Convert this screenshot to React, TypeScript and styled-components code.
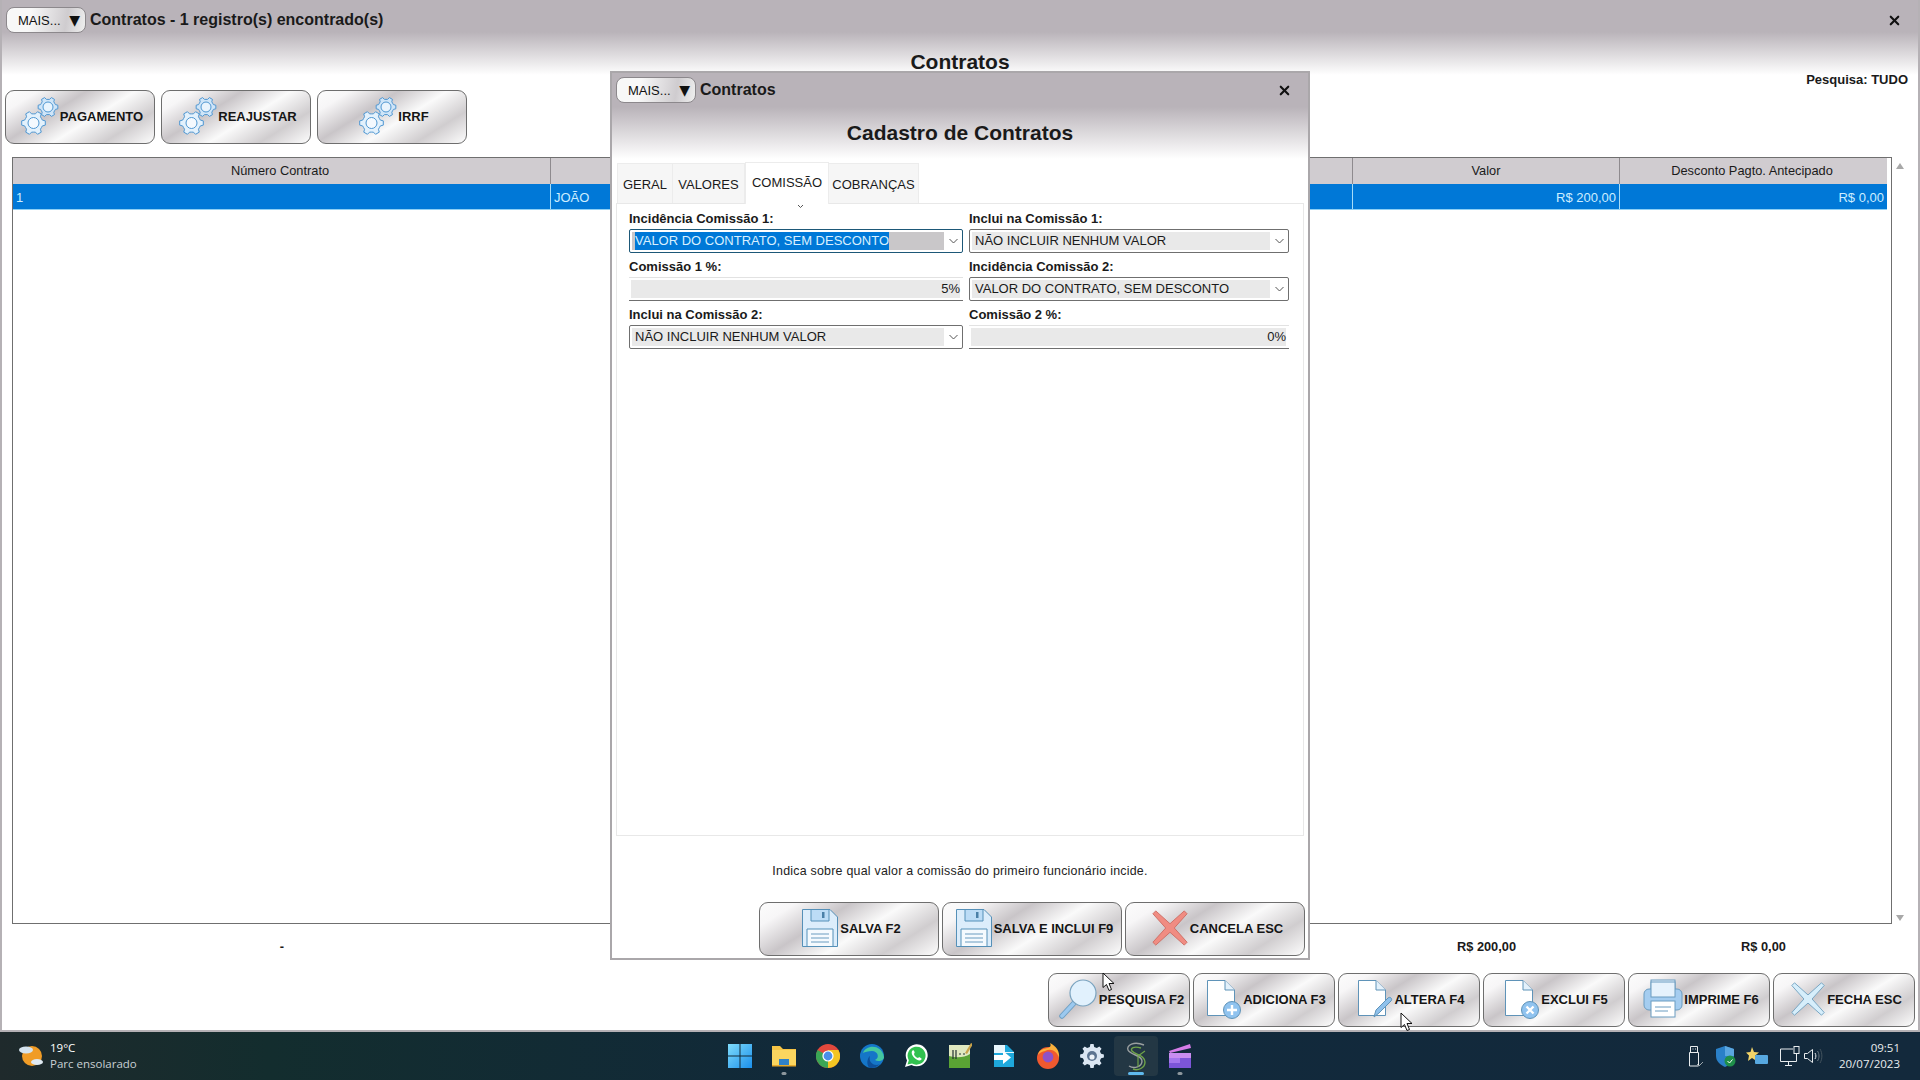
import { FC, ReactNode } from "react";
import styled, { createGlobalStyle } from "styled-components";
import { X } from "lucide-react";

const GlobalStyle = createGlobalStyle`
  html, body {
    margin: 0;
    padding: 0;
    background: #fff;
    overflow: hidden;
  }
  * { box-sizing: border-box; }
`;

const metal = `linear-gradient(148deg, #fcfcfc 0, #f7f6f7 14%, #c9c5c8 35%, #fafafa 56%, #d0cdcf 78%, #fdfdfd 100%)`;

const Screen = styled.div`
  position: relative;
  width: 1920px;
  height: 1080px;
  display: flex;
  flex-direction: column;
  font-family: "Liberation Sans", Arial, sans-serif;
  color: #1a1a1a;
  overflow: hidden;
`;

const Window = styled.main`
  height: 1032px;
  border: solid #b5b1b5;
  border-width: 0 2px 2px 2px;
  background: linear-gradient(#b9b3b9 0, #b9b3b9 32px, #fff 75px);
  display: flex;
  flex-direction: column;
`;

const TopRow = styled.div`
  height: 40px;
  padding: 7px 11px 7px 4px;
  display: flex;
  align-items: center;
  gap: 4px;
`;

const MoreButton = styled.button`
  width: 80px;
  height: 26px;
  padding: 0 5px 0 11px;
  border: 1px solid #8c888c;
  border-radius: 8px;
  background: linear-gradient(100deg, #f8f8f8 30%, #cfcccf 75%, #efefef 100%);
  display: flex;
  align-items: center;
  justify-content: space-between;
  font: 13px "Liberation Sans", Arial, sans-serif;
  color: #111;
`;

const MoreArrow = styled.span`
  font-family: "DejaVu Sans", sans-serif;
  font-size: 14px;
`;

const WindowTitle = styled.span`
  font-size: 16px;
  font-weight: 700;
  flex: 1;
`;

const CloseMark = styled(X)`
  color: #111;
  margin-right: 5px;
`;

const SubRow = styled.div`
  height: 50px;
  padding: 10px 10px 2px;
  display: grid;
  grid-template-columns: 1fr auto 1fr;
`;

const PageTitle = styled.h1`
  grid-column: 2;
  margin: 0;
  font-size: 21px;
  line-height: 24px;
  align-self: start;
`;

const SearchInfo = styled.span`
  grid-column: 3;
  justify-self: end;
  align-self: end;
  font-size: 13px;
  font-weight: 700;
  line-height: 16px;
`;

const Toolbar = styled.div`
  display: flex;
  gap: 6px;
  padding-left: 3px;
`;

const ActionButton = styled.button<{ $w?: number }>`
  width: ${(p) => p.$w ?? 150}px;
  height: 54px;
  padding: 0 0 2px 4px;
  border: 1px solid #6e6e6e;
  border-radius: 9px;
  background: ${metal};
  display: flex;
  align-items: center;
  justify-content: center;
  gap: 1px;
  font: 700 13px "Liberation Sans", Arial, sans-serif;
  color: #151515;
  white-space: nowrap;

  svg { flex: none; }
`;

const TableArea = styled.div`
  margin: 13px 0 0 10px;
  height: 767px;
  display: flex;
`;

const Table = styled.div`
  width: 1880px;
  border: 1px solid #6f6f6f;
`;

const columns = "538px 802px 267px 267px";

const HeaderRow = styled.div`
  display: grid;
  grid-template-columns: ${columns};
  height: 26px;
  background: #d0ccd0;
  width: 1874px;
  font-size: 12.8px;
`;

const HeaderCell = styled.div`
  display: flex;
  align-items: center;
  justify-content: center;
  padding-bottom: 2px;
  border-right: 1px solid #8e8a8e;
  &:first-child { padding-right: 3px; }
  &:last-child { border-right: 0; padding-right: 3px; }
`;

const DataRow = styled.div`
  display: grid;
  grid-template-columns: ${columns};
  height: 26px;
  width: 1874px;
  background: #0078d7;
  color: #cdeeff;
  font-size: 13px;
  border-bottom: 1px solid #8ed0f5;
`;

const DataCell = styled.div<{ $right?: boolean }>`
  display: flex;
  align-items: center;
  padding: 1px 3px 0;
  justify-content: ${(p) => (p.$right ? "flex-end" : "flex-start")};
  border-right: 1px solid #a6dcf8;
  &:last-child { border-right: 0; }
`;

const Scrollbar = styled.div`
  width: 16px;
  display: flex;
  flex-direction: column;
  justify-content: space-between;
  align-items: center;
  padding: 6px 0 3px;
`;

const ScrollArrow = styled.span<{ $down?: boolean }>`
  width: 0;
  height: 0;
  border-left: 4px solid transparent;
  border-right: 4px solid transparent;
  ${(p) => (p.$down ? "border-top: 6px solid #a8a8a8;" : "border-bottom: 6px solid #a8a8a8;")}
`;

const TotalsRow = styled.div`
  margin: 14px 0 0 11px;
  width: 1876px;
  height: 18px;
  display: grid;
  grid-template-columns: ${columns};
  font-size: 12.8px;
  font-weight: 700;
  line-height: 18px;
  text-align: center;

  span:last-child { padding-left: 20px; }
`;

const Footer = styled.div`
  margin-top: 17px;
  padding-right: 3px;
  display: flex;
  justify-content: flex-end;
  gap: 3px;
`;

/* modal */

const Modal = styled.section`
  position: absolute;
  left: 610px;
  top: 71px;
  width: 700px;
  height: 889px;
  border: 2px solid #aaa7aa;
  background: linear-gradient(#b9b3b9 0, #b9b3b9 34px, #fff 86px);
  display: flex;
  flex-direction: column;
`;

const ModalTop = styled(TopRow)`
  height: 38px;
  padding: 0 11px 4px 4px;
`;

const ModalHeading = styled.h2`
  margin: 10px 0 0;
  font-size: 21px;
  line-height: 24px;
  text-align: center;
`;

const TabStrip = styled.div`
  margin-top: 16px;
  height: 42px;
  padding-left: 5px;
  display: flex;
  align-items: flex-end;
`;

const Tab = styled.div<{ $active?: boolean; $w: number }>`
  width: ${(p) => p.$w}px;
  height: ${(p) => (p.$active ? 42 : 40)}px;
  padding-top: ${(p) => (p.$active ? 0 : 2)}px;
  padding-bottom: ${(p) => (p.$active ? 2 : 0)}px;
  margin-bottom: ${(p) => (p.$active ? -1 : 0)}px;
  position: relative;
  z-index: ${(p) => (p.$active ? 1 : 0)};
  display: flex;
  align-items: center;
  justify-content: center;
  font-size: 13px;
  background: ${(p) => (p.$active ? "#fff" : "#f6f6f6")};
  border: 1px solid #ececec;
  border-bottom: 0;
  border-left-width: ${(p) => (p.$active ? 1 : 0)}px;
  &:first-child { border-left-width: 1px; }
`;

const Panel = styled.div`
  position: relative;
  margin: 0 4px;
  height: 633px;
  border: 1px solid #e8e8e8;
  background: #fff;
  padding: 7px 12px 6px;
  display: grid;
  grid-template-columns: 334px 320px;
  grid-auto-rows: 42px;
  gap: 6px;
`;

const TabCaret = styled.span`
  position: absolute;
  left: 180px;
  top: 0;
  display: flex;
`;

const Field = styled.div`
  display: flex;
  flex-direction: column;
`;

const Label = styled.label`
  font-size: 13px;
  font-weight: 700;
  line-height: 16px;
  margin-bottom: 2px;
`;

const SelectBox = styled.div<{ $focused?: boolean }>`
  height: 24px;
  border: 1px solid ${(p) => (p.$focused ? "#1d5878" : "#6f6f6f")};
  border-radius: 2px;
  padding: 2px 0 2px 2px;
  display: flex;
  align-items: stretch;
`;

const SelectValue = styled.div<{ $focused?: boolean }>`
  flex: 1;
  padding-left: 3px;
  background: ${(p) => (p.$focused ? "#c9c7c9" : "#e9e9e9")};
  font-size: 13px;
  line-height: 18px;
  white-space: nowrap;
`;

const Highlight = styled.span`
  display: inline-block;
  background: #0078d7;
  color: #d8f0ff;
`;

const SelectArrow = styled.div`
  width: 18px;
  display: flex;
  align-items: center;
  justify-content: center;
`;

const NumberBox = styled.div`
  height: 24px;
  border-top: 1px solid #e2e2e2;
  border-bottom: 1px solid #6f6f6f;
  padding: 2px 3px 2px 2px;
`;

const NumberValue = styled.div`
  height: 100%;
  background: #e9e9e9;
  font-size: 13px;
  line-height: 18px;
  text-align: right;
`;

const HelpText = styled.p`
  margin: 0;
  padding-top: 25px;
  height: 66px;
  font-size: 12.4px;
  line-height: 20px;
  letter-spacing: 0.24px;
  text-align: center;
  color: #222;
`;

const ModalActions = styled.div`
  display: flex;
  justify-content: flex-end;
  gap: 3px;
  padding-right: 3px;
`;

/* taskbar */

const Taskbar = styled.footer`
  height: 48px;
  flex: none;
  background: linear-gradient(90deg, #1f2a2c 0, #132d2e 14%, #11293b 45%, #13293c 100%);
  display: grid;
  grid-template-columns: 718px 484px 1fr;
  align-items: center;
  color: #fff;
`;

const Weather = styled.div`
  display: flex;
  align-items: center;
  gap: 7px;
  padding-left: 19px;
`;

const WeatherText = styled.div`
  font-family: "Open Sans", "Noto Sans", sans-serif;
  font-size: 11.5px;
  line-height: 16px;
  color: #c8d0d4;
`;

const WeatherTemp = styled.div`
  color: #fff;
`;

const AppIcons = styled.div`
  display: flex;
`;

const AppSlot = styled.div<{ $active?: boolean; $dot?: boolean }>`
  position: relative;
  width: 44px;
  height: 40px;
  display: flex;
  align-items: center;
  justify-content: center;
  border-radius: 4px;
  background: ${(p) => (p.$active ? "#233744" : "transparent")};

  &::after {
    content: "";
    display: ${(p) => (p.$active || p.$dot ? "block" : "none")};
    position: absolute;
    bottom: 1px;
    left: 50%;
    transform: translateX(-50%);
    width: ${(p) => (p.$active ? 16 : 5)}px;
    height: 3px;
    border-radius: 2px;
    background: ${(p) => (p.$active ? "#5fb9ee" : "#8d979d")};
  }
`;

const Tray = styled.div`
  display: flex;
  justify-content: flex-end;
  align-items: center;
  gap: 8px;
  padding-right: 20px;
`;

const TrayVolume = styled.div`
  display: flex;
  margin: 0 8px 0 -7px;
`;

const Clock = styled.div`
  font-family: "Open Sans", "Noto Sans", sans-serif;
  font-size: 11.5px;
  line-height: 16px;
  text-align: right;
  color: #e8ecee;
`;

const Cursor = styled.svg<{ $x: number; $y: number }>`
  position: absolute;
  left: ${(p) => p.$x}px;
  top: ${(p) => p.$y}px;
`;

/* drawings */

const gearPath = (cx: number, cy: number, r: number, teeth: number) => {
  const pts: string[] = [];
  const step = (Math.PI * 2) / teeth;
  for (let i = 0; i < teeth; i++) {
    const a = i * step;
    const at = (rad: number, ang: number) =>
      `${(cx + rad * Math.cos(ang)).toFixed(2)} ${(cy + rad * Math.sin(ang)).toFixed(2)}`;
    pts.push(at(r * 0.76, a - step * 0.5));
    pts.push(at(r * 0.78, a - step * 0.3));
    pts.push(at(r, a - step * 0.17));
    pts.push(at(r, a + step * 0.17));
    pts.push(at(r * 0.78, a + step * 0.3));
  }
  return `M${pts.join("L")}Z`;
};

const GearsIcon = () => (
  <svg width="38" height="40" viewBox="0 0 38 40">
    <path d={gearPath(27, 11, 10, 6)} fill="#cfe5f8" stroke="#4f97d2" strokeWidth="1" />
    <circle cx="27" cy="11" r="5" fill="#e9f4fd" stroke="#4f97d2" />
    <path d={gearPath(12.5, 27, 12, 6)} fill="#e3f1fc" stroke="#4f97d2" strokeWidth="1" />
    <circle cx="12.5" cy="27" r="5.5" fill="#f4f9fe" stroke="#4f97d2" />
  </svg>
);

const FloppyIcon = () => (
  <svg width="38" height="40" viewBox="0 0 38 40">
    <path d="M1.5 1.5H29L36.5 9V38.5H1.5Z" fill="#dcedfb" stroke="#5590b8" />
    <path d="M10 1.5H28V13H10Z" fill="#bcdcf6" stroke="#5590b8" />
    <rect x="21" y="4" width="2.5" height="6" fill="#4a80a8" />
    <path d="M6 21H32V38.5H6Z" fill="#f5fafe" stroke="#5590b8" />
    <path d="M10 26H28M10 30H28M10 34H28" stroke="#6b9cc0" />
  </svg>
);

const CrossIcon: FC<{ fill: string; stroke: string; size?: number }> = ({ fill, stroke, size = 38 }) => (
  <svg width={size} height={size} viewBox="0 0 40 40">
    <path
      d="M5 2L20 15.5L35 2L38 5L24.5 20L38 35L35 38L20 24.5L5 38L2 35L15.5 20L2 5Z"
      fill={fill}
      stroke={stroke}
      strokeLinejoin="round"
    />
  </svg>
);

const SearchIcon = () => (
  <svg width="40" height="40" viewBox="0 0 40 40">
    <path d="M4 37L17 23" stroke="#6d9fc4" strokeWidth="5.5" strokeLinecap="round" />
    <path d="M4 37L17 23" stroke="#9cc9ef" strokeWidth="3.5" strokeLinecap="round" />
    <circle cx="25" cy="14" r="13" fill="#e1f1fd" stroke="#7aa3bf" strokeWidth="1.2" />
  </svg>
);

const DocShape = () => (
  <>
    <path d="M1.5 1.5H19L28.5 11V36.5H1.5Z" fill="#fff" stroke="#5f93b8" />
    <path d="M19 1.5V11H28.5" fill="#e4f1fb" stroke="#5f93b8" />
  </>
);

const DocPlusIcon = () => (
  <svg width="36" height="40" viewBox="0 0 36 40">
    <DocShape />
    <circle cx="26" cy="31" r="8.5" fill="#90c3ef" stroke="#5f93b8" />
    <path d="M21 31H31M26 26V36" stroke="#fff" strokeWidth="2.4" />
  </svg>
);

const DocEditIcon = () => (
  <svg width="36" height="40" viewBox="0 0 36 40">
    <DocShape />
    <path d="M17 38L19 31L31 19C33 17 36 20 34 22L22 34Z" fill="#8fc1ec" stroke="#5f93b8" />
  </svg>
);

const DocCrossIcon = () => (
  <svg width="36" height="40" viewBox="0 0 36 40">
    <DocShape />
    <circle cx="26" cy="31" r="8.5" fill="#90c3ef" stroke="#5f93b8" />
    <path d="M22.5 27.5L29.5 34.5M29.5 27.5L22.5 34.5" stroke="#fff" strokeWidth="2.4" />
  </svg>
);

const PrinterIcon = () => (
  <svg width="40" height="40" viewBox="0 0 40 40">
    <rect x="8" y="1" width="24" height="19" fill="#e8f3fc" stroke="#6b9cc0" />
    <rect x="1" y="10" width="38" height="21" rx="5" fill="#a5cdf0" stroke="#6b9cc0" />
    <rect x="8" y="3" width="24" height="15" fill="#e6f2fc" stroke="#6b9cc0" />
    <rect x="8" y="22" width="24" height="16" fill="#fff" stroke="#6b9cc0" />
    <path d="M12 28H28M12 32H25" stroke="#6b9cc0" />
  </svg>
);

const SunCloudIcon = () => (
  <svg width="24" height="24" viewBox="0 0 24 24">
    <circle cx="13" cy="12" r="10" fill="#f09c26" />
    <ellipse cx="7" cy="6" rx="7" ry="3.4" fill="#d5e3ee" />
    <ellipse cx="18" cy="18" rx="6" ry="3" fill="#dfe9f1" />
  </svg>
);

const WinIcon = () => (
  <svg width="24" height="24" viewBox="0 0 24 24">
    <defs>
      <linearGradient id="win" x1="0" y1="0" x2="1" y2="1">
        <stop offset="0" stopColor="#7fdcfb" />
        <stop offset="1" stopColor="#1b90ec" />
      </linearGradient>
    </defs>
    <path d="M0 0H11.5V11.5H0ZM12.5 0H24V11.5H12.5ZM0 12.5H11.5V24H0ZM12.5 12.5H24V24H12.5Z" fill="url(#win)" />
  </svg>
);

const FolderIcon = () => (
  <svg width="26" height="24" viewBox="0 0 26 24">
    <path d="M1 2H9L12 5H25V22H1Z" fill="#f6c445" />
    <path d="M1 6H25V22H1Z" fill="#fbd65f" />
    <path d="M8 15H18V22H8Z" fill="#2f82c8" />
    <path d="M1 21H25V22.5H1Z" fill="#e7a92a" />
  </svg>
);

const ChromeIcon = () => (
  <svg width="24" height="24" viewBox="0 0 24 24">
    <circle cx="12" cy="12" r="12" fill="#e2483c" />
    <path d="M12 12L1.6 6A12 12 0 0 0 12 24L18 13.6Z" fill="#3aa655" />
    <path d="M12 12L12 24A12 12 0 0 0 22.4 6H12Z" fill="#f3c522" />
    <circle cx="12" cy="12" r="5.6" fill="#fff" />
    <circle cx="12" cy="12" r="4.4" fill="#4a8fe8" />
  </svg>
);

const EdgeIcon = () => (
  <svg width="24" height="24" viewBox="0 0 24 24">
    <circle cx="12" cy="12" r="12" fill="#1576c8" />
    <path d="M3 9C6 0 22 0 24 13C24 17 18 18 15 16C20 14 18 7 12 7C8 7 5 8 3 9Z" fill="#45c8a0" />
    <path d="M10 12C8 18 14 23 20 20C16 24 12 24 10 24C6 22 7 14 10 12Z" fill="#0d4f9a" />
  </svg>
);

const WhatsAppIcon = () => (
  <svg width="24" height="24" viewBox="0 0 24 24">
    <path d="M1 23L3 16.5A11 11 0 1 1 7.5 21Z" fill="#fff" />
    <path d="M3.5 20.5L4.8 16.2A9 9 0 1 1 8 19.4Z" fill="#31c14f" />
    <path d="M8 7C9 6 10 6 10.5 8C11 9 10 9.5 10 10C10.5 12 12 13.5 14 14C14.5 14 15 13 16 13.5C18 14.5 18 15 17 16C14 18 6 12 8 7Z" fill="#fff" />
  </svg>
);

const NotepadIcon = () => (
  <svg width="24" height="26" viewBox="0 0 24 26">
    <path d="M1 2H22V25H1Z" fill="#dfe8c0" />
    <path d="M1 13C8 15 16 15 22 11V25H1Z" fill="#5aa334" />
    <path d="M5 7V16M8 7V16M11 11H13M15 11H17" stroke="#233" strokeWidth="1.2" />
    <path d="M17 10L23 0L25 1L19 11Z" fill="#c9a24a" />
  </svg>
);

const ArrowDocIcon = () => (
  <svg width="22" height="24" viewBox="0 0 22 24">
    <path d="M1 1H14L21 8V23H1Z" fill="#1ea8dc" />
    <path d="M1 1H12V8H21V9H1Z" fill="#e9f6fc" />
    <path d="M1 11H10V7L18 13.5L10 20V16H1Z" fill="#fff" />
  </svg>
);

const FirefoxIcon = () => (
  <svg width="24" height="26" viewBox="0 0 24 26">
    <circle cx="12" cy="15" r="11" fill="#f0592f" />
    <path d="M2 12C3 6 8 6 12 5C15 4 15 2 14 0C20 3 24 8 23 15C21 8 15 5 9 8C5 9 3 10 2 12Z" fill="#fbb03b" />
    <circle cx="12" cy="14" r="5.4" fill="#8f52c8" />
  </svg>
);

const SnowGearIcon = () => (
  <svg width="24" height="24" viewBox="0 0 24 24">
    <path d={gearPath(12, 12, 12, 8)} fill="#dbe6f2" />
    <circle cx="12" cy="12" r="5" fill="#5d7490" />
    <circle cx="12" cy="13" r="2.6" fill="#eef3f8" />
  </svg>
);

const SgIcon = () => (
  <svg width="24" height="30" viewBox="0 0 24 30" fill="none">
    <path d="M20 4C10 0 2 4 4 9C6 14 18 14 18 20C18 26 10 28 5 25" stroke="#9a9fa0" strokeWidth="1.4" />
    <path d="M17 7C10 5 6 7 8 10C11 14 21 14 21 21C21 27 14 30 9 28" stroke="#6fa34a" strokeWidth="1.4" />
    <path d="M14 15V26M14 15L21 10" stroke="#6fa34a" strokeWidth="1.2" />
  </svg>
);

const ClapperIcon = () => (
  <svg width="24" height="26" viewBox="0 0 24 26">
    <path d="M1 8L22 1L23 5L2 10Z" fill="#d57ce8" />
    <path d="M1 10H23V25H1Z" fill="#7c55d8" />
    <path d="M1 10H23V15H1Z" fill="#c98df0" />
    <path d="M1 15H12V20H1Z" fill="#a476ec" />
  </svg>
);

const UsbIcon = () => (
  <svg width="24" height="24" viewBox="0 0 24 24" fill="none" stroke="#e8ecee">
    <path d="M8.5 2.5H15.5V8.5H8.5ZM7.5 8.5H16.5V22H7.5Z" />
    <path d="M10.5 5H11.5M13 5H14" />
    <path d="M15 20L17 22L21 18" stroke="#9aa4aa" />
  </svg>
);

const ShieldIcon = () => (
  <svg width="24" height="24" viewBox="0 0 24 24">
    <path d="M11 2L20 5V12C20 18 15 21 11 23C7 21 2 18 2 12V5Z" fill="#2a80c8" />
    <path d="M11 2L20 5V12H11Z" fill="#5aa6e0" />
    <circle cx="16" cy="17" r="5.5" fill="#1f8f4a" />
    <path d="M13.5 17L15.5 19L18.5 15.5" stroke="#fff" fill="none" />
  </svg>
);

const StarFolderIcon = () => (
  <svg width="24" height="24" viewBox="0 0 24 24">
    <path d="M6 3L8 8L13 8.5L9.2 11.5L10.5 17L6 14L2 17L3 11.5L0 8.5L4.5 8Z" fill="#f2d468" />
    <rect x="9" y="11" width="13" height="9" rx="1" fill="#57a8e0" />
  </svg>
);

const MonitorIcon = () => (
  <svg width="24" height="24" viewBox="0 0 24 24" fill="none" stroke="#e8ecee">
    <path d="M15 5H2.5V17.5H18.5V12" />
    <path d="M7 21.5H14M10.5 17.5V21.5" />
    <rect x="16" y="2.5" width="5" height="7" />
    <path d="M18.5 9.5V13" />
  </svg>
);

const SpeakerIcon = () => (
  <svg width="20" height="24" viewBox="0 0 20 24" fill="none" stroke="#e8ecee">
    <path d="M1.5 9.5H4.5L9.5 5.5V18.5L4.5 14.5H1.5Z" />
    <path d="M12 9C13.2 11 13.2 13 12 15" />
    <path d="M14.5 7C16.5 10 16.5 14 14.5 17" stroke="#6d7b84" />
    <path d="M17 5C19.5 9 19.5 15 17 19" stroke="#43535e" />
  </svg>
);

const Chevron = () => (
  <svg width="9" height="6" viewBox="0 0 9 6" fill="none" stroke="#555">
    <path d="M0.5 1L4.5 5L8.5 1" />
  </svg>
);

const Pointer: FC<{ x: number; y: number }> = ({ x, y }) => (
  <Cursor $x={x} $y={y} width="14" height="20" viewBox="0 0 14 20">
    <path d="M1 1V15.5L4.5 12.5L7 18.5L9.5 17.5L7 11.5H12Z" fill="#fff" stroke="#111" />
  </Cursor>
);

/* small compositions */

const More = () => (
  <MoreButton>
    <span>MAIS...</span>
    <MoreArrow>▼</MoreArrow>
  </MoreButton>
);

const Action: FC<{ icon: ReactNode; label: string; w?: number }> = ({ icon, label, w }) => (
  <ActionButton $w={w}>
    {icon}
    {label}
  </ActionButton>
);

const SelectField: FC<{ label: string; value: string; focused?: boolean }> = ({ label, value, focused }) => (
  <Field>
    <Label>{label}</Label>
    <SelectBox $focused={focused}>
      <SelectValue $focused={focused}>{focused ? <Highlight>{value}</Highlight> : value}</SelectValue>
      <SelectArrow>
        <Chevron />
      </SelectArrow>
    </SelectBox>
  </Field>
);

const NumberField: FC<{ label: string; value: string }> = ({ label, value }) => (
  <Field>
    <Label>{label}</Label>
    <NumberBox>
      <NumberValue>{value}</NumberValue>
    </NumberBox>
  </Field>
);

const tabs = [
  { label: "GERAL", w: 56 },
  { label: "VALORES", w: 72 },
  { label: "COMISSÃO", w: 84, active: true },
  { label: "COBRANÇAS", w: 90 },
];

const apps = [
  { key: "win", icon: <WinIcon /> },
  { key: "folder", icon: <FolderIcon />, dot: true },
  { key: "chrome", icon: <ChromeIcon /> },
  { key: "edge", icon: <EdgeIcon /> },
  { key: "whatsapp", icon: <WhatsAppIcon /> },
  { key: "notepad", icon: <NotepadIcon /> },
  { key: "arrow", icon: <ArrowDocIcon /> },
  { key: "firefox", icon: <FirefoxIcon /> },
  { key: "gear", icon: <SnowGearIcon /> },
  { key: "sg", icon: <SgIcon />, active: true },
  { key: "clapper", icon: <ClapperIcon />, dot: true },
];

export default function App() {
  return (
    <>
      <GlobalStyle />
      <Screen>
        <Window>
          <TopRow>
            <More />
            <WindowTitle>Contratos - 1 registro(s) encontrado(s)</WindowTitle>
            <CloseMark size={15} strokeWidth={3.4} />
          </TopRow>
          <SubRow>
            <PageTitle>Contratos</PageTitle>
            <SearchInfo>Pesquisa: TUDO</SearchInfo>
          </SubRow>
          <Toolbar>
            <Action icon={<GearsIcon />} label="PAGAMENTO" />
            <Action icon={<GearsIcon />} label="REAJUSTAR" />
            <Action icon={<GearsIcon />} label="IRRF" />
          </Toolbar>
          <TableArea>
            <Table>
              <HeaderRow>
                <HeaderCell>Número Contrato</HeaderCell>
                <HeaderCell />
                <HeaderCell>Valor</HeaderCell>
                <HeaderCell>Desconto Pagto. Antecipado</HeaderCell>
              </HeaderRow>
              <DataRow>
                <DataCell>1</DataCell>
                <DataCell>JOÃO</DataCell>
                <DataCell $right>R$ 200,00</DataCell>
                <DataCell $right>R$ 0,00</DataCell>
              </DataRow>
            </Table>
            <Scrollbar>
              <ScrollArrow />
              <ScrollArrow $down />
            </Scrollbar>
          </TableArea>
          <TotalsRow>
            <span>-</span>
            <span />
            <span>R$ 200,00</span>
            <span>R$ 0,00</span>
          </TotalsRow>
          <Footer>
            <Action w={142} icon={<SearchIcon />} label="PESQUISA F2" />
            <Action w={142} icon={<DocPlusIcon />} label="ADICIONA F3" />
            <Action w={142} icon={<DocEditIcon />} label="ALTERA F4" />
            <Action w={142} icon={<DocCrossIcon />} label="EXCLUI F5" />
            <Action w={142} icon={<PrinterIcon />} label="IMPRIME F6" />
            <Action w={142} icon={<CrossIcon fill="#d6eefb" stroke="#6fa0c0" size={36} />} label="FECHA ESC" />
          </Footer>
        </Window>

        <Taskbar>
          <Weather>
            <SunCloudIcon />
            <WeatherText>
              <WeatherTemp>19°C</WeatherTemp>
              Parc ensolarado
            </WeatherText>
          </Weather>
          <AppIcons>
            {apps.map((app) => (
              <AppSlot key={app.key} $active={app.active} $dot={app.dot}>
                {app.icon}
              </AppSlot>
            ))}
          </AppIcons>
          <Tray>
            <UsbIcon />
            <ShieldIcon />
            <StarFolderIcon />
            <MonitorIcon />
            <TrayVolume>
              <SpeakerIcon />
            </TrayVolume>
            <Clock>
              09:51
              <br />
              20/07/2023
            </Clock>
          </Tray>
        </Taskbar>

        <Modal>
          <ModalTop>
            <More />
            <WindowTitle>Contratos</WindowTitle>
            <CloseMark size={15} strokeWidth={3.4} />
          </ModalTop>
          <ModalHeading>Cadastro de Contratos</ModalHeading>
          <TabStrip>
            {tabs.map((tab) => (
              <Tab key={tab.label} $w={tab.w} $active={tab.active}>
                {tab.label}
              </Tab>
            ))}
          </TabStrip>
          <Panel>
            <TabCaret>
              <svg width="7" height="5" viewBox="0 0 7 5" fill="none" stroke="#555">
                <path d="M1 1L3.5 3.5L6 1" />
              </svg>
            </TabCaret>
            <SelectField label="Incidência Comissão 1:" value="VALOR DO CONTRATO, SEM DESCONTO" focused />
            <SelectField label="Inclui na Comissão 1:" value="NÃO INCLUIR NENHUM VALOR" />
            <NumberField label="Comissão 1 %:" value="5%" />
            <SelectField label="Incidência Comissão 2:" value="VALOR DO CONTRATO, SEM DESCONTO" />
            <SelectField label="Inclui na Comissão 2:" value="NÃO INCLUIR NENHUM VALOR" />
            <NumberField label="Comissão 2 %:" value="0%" />
          </Panel>
          <HelpText>Indica sobre qual valor a comissão do primeiro funcionário incide.</HelpText>
          <ModalActions>
            <Action w={180} icon={<FloppyIcon />} label="SALVA F2" />
            <Action w={180} icon={<FloppyIcon />} label="SALVA E INCLUI F9" />
            <Action w={180} icon={<CrossIcon fill="#f08c82" stroke="#cf6e64" />} label="CANCELA ESC" />
          </ModalActions>
        </Modal>

        <Pointer x={1102} y={972} />
        <Pointer x={1400} y={1012} />
      </Screen>
    </>
  );
}
